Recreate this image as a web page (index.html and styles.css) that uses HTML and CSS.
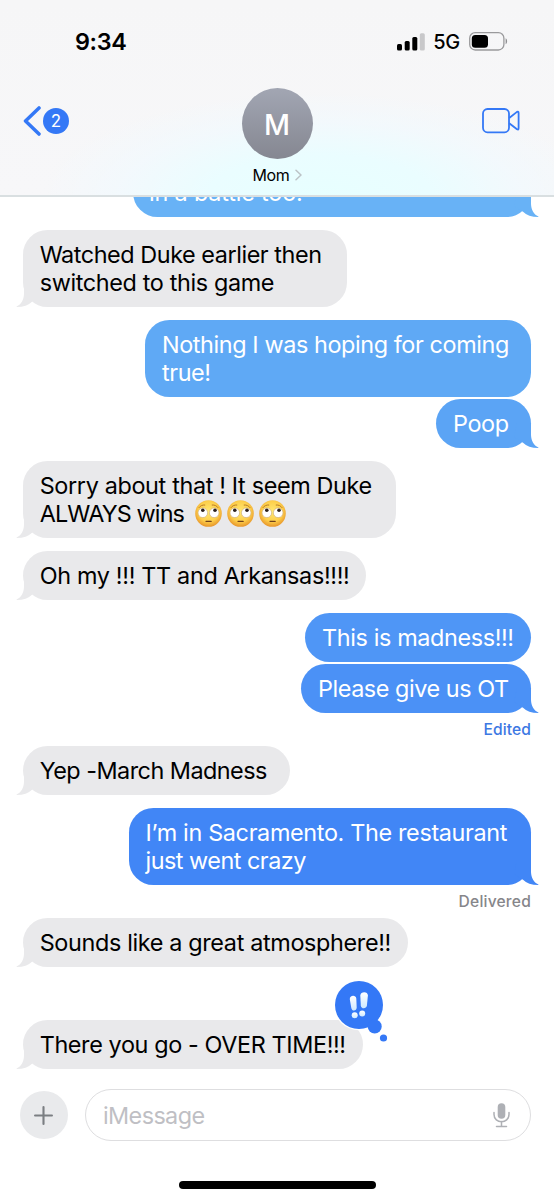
FILE: index.html
```html
<!DOCTYPE html>
<html lang="en">
<head>
<meta charset="utf-8">
<title>Messages</title>
<link rel="stylesheet" href="styles.css">
</head>
<body>
<svg class="defs" width="0" height="0" aria-hidden="true">
  <defs>
    <symbol id="tail" viewBox="0 0 25 25">
      <path d="M3 0H17V12C17.200 17.500 19.500 22.500 24.400 24.500V25C17.500 25 12.500 23.300 9 19.800L0 14Z" fill="currentColor"/>
    </symbol>
    <radialGradient id="face" cx=".5" cy=".42" r=".58">
      <stop offset="0" stop-color="#ffe873"/><stop offset=".65" stop-color="#fdcf4b"/><stop offset="1" stop-color="#e8962b"/>
    </radialGradient>
    <symbol id="eyeroll" viewBox="0 0 27 27">
      <circle cx="13.500" cy="13.500" r="13.300" fill="url(#face)"/>
      <path d="M4 7.600C5.500 5.600 7.500 4.800 9.800 5M17.200 5C19.500 4.800 21.500 5.600 23 7.600" fill="none" stroke="#b97a25" stroke-width="1" stroke-linecap="round"/>
      <circle cx="7.800" cy="12.800" r="4.800" fill="#fff" stroke="#c9a777" stroke-width=".6"/>
      <circle cx="19.200" cy="12.800" r="4.800" fill="#fff" stroke="#c9a777" stroke-width=".6"/>
      <circle cx="7.800" cy="10.200" r="1.800" fill="#2c211d"/>
      <circle cx="20" cy="10.200" r="1.800" fill="#2c211d"/>
      <path d="M11 21.300H16.200" stroke="#70401c" stroke-width="1.300" stroke-linecap="round"/>
    </symbol>
    <linearGradient id="mark" x1="0" y1="0" x2="0" y2="1">
      <stop offset="0" stop-color="#fff"/><stop offset="1" stop-color="#cfe9ff"/>
    </linearGradient>
  </defs>
</svg>

<div class="phone">
  <header class="header">
    <div class="status">
      <span class="clock">9:34</span>
      <div class="status-right">
        <svg class="signal" viewBox="0 0 28 18">
          <rect x="0" y="11" width="5" height="6.500" rx="1.500"/>
          <rect x="7.700" y="8" width="5" height="9.500" rx="1.500"/>
          <rect x="15.300" y="4" width="5" height="13.500" rx="1.500"/>
          <rect x="22.800" y="0.300" width="5" height="17.200" rx="1.500" fill="#c8c8ca"/>
        </svg>
        <span class="network">5G</span>
        <svg class="battery" viewBox="0 0 39 19">
          <rect x=".7" y=".7" width="34.200" height="17.300" rx="5.500" fill="none" stroke="#9a9a9c" stroke-width="1.300"/>
          <rect x="2.800" y="2.900" width="16.200" height="12.900" rx="3.500"/>
          <path d="M36.600 6.200C38.600 7.300 38.600 11.100 36.600 12.200Z" fill="#8f8f92"/>
        </svg>
      </div>
    </div>
    <div class="nav">
      <div class="back">
        <svg class="chevron" viewBox="0 0 18 30"><path d="M16 1.900L2.500 15L16 28.100" fill="none" stroke="#3478f6" stroke-width="3.500" stroke-linecap="round" stroke-linejoin="round"/></svg>
        <span class="unread">2</span>
      </div>
      <div class="contact">
        <div class="avatar">M</div>
        <div class="name"><span>Mom</span>
          <svg class="disclosure" viewBox="0 0 7 12"><path d="M1 1.200L6 6L1 10.800" fill="none" stroke="#bcc3c6" stroke-width="1.500" stroke-linecap="round" stroke-linejoin="round"/></svg>
        </div>
      </div>
      <svg class="video" viewBox="0 0 38 26">
        <rect x="1" y="1" width="26" height="23.300" rx="4.500" fill="none" stroke="#3478f6" stroke-width="1.800"/>
        <path d="M27.200 10L35 3.900Q36.600 3 36.600 4.900V20.300Q36.600 22.300 35 21.300L27.200 15.200" fill="none" stroke="#3478f6" stroke-width="1.800" stroke-linejoin="round"/>
      </svg>
    </div>
  </header>

  <main class="thread">
    <div class="msg sent m-battle"><p>in a battle too!</p><svg class="tail"><use href="#tail"/></svg></div>
    <div class="msg received m-duke"><p>Watched Duke earlier then</p><p class="t-switched">switched to this game</p><svg class="tail"><use href="#tail"/></svg></div>
    <div class="msg sent m-hoping"><p>Nothing I was hoping for coming</p><p>true!</p></div>
    <div class="msg sent m-poop"><p>Poop</p><svg class="tail"><use href="#tail"/></svg></div>
    <div class="msg received m-sorry"><p>Sorry about that ! It seem Duke</p><p class="with-emoji"><span class="t-always">ALWAYS wins</span><svg class="emoji"><use href="#eyeroll"/></svg><svg class="emoji"><use href="#eyeroll"/></svg><svg class="emoji"><use href="#eyeroll"/></svg></p><svg class="tail"><use href="#tail"/></svg></div>
    <div class="msg received m-ohmy"><p>Oh my !!! TT and Arkansas!!!!</p><svg class="tail"><use href="#tail"/></svg></div>
    <div class="msg sent m-madness"><p>This is madness!!!</p></div>
    <div class="msg sent m-please"><p>Please give us OT</p><svg class="tail"><use href="#tail"/></svg></div>
    <div class="receipt edited">Edited</div>
    <div class="msg received m-yep"><p>Yep -March Madness</p><svg class="tail"><use href="#tail"/></svg></div>
    <div class="msg sent m-sacramento"><p>I’m in Sacramento. The restaurant</p><p class="t-crazy">just went crazy</p><svg class="tail"><use href="#tail"/></svg></div>
    <div class="receipt delivered">Delivered</div>
    <div class="msg received m-sounds"><p>Sounds like a great atmosphere!!</p><svg class="tail"><use href="#tail"/></svg></div>
    <div class="msg received m-overtime"><p>There you go - OVER TIME!!!</p><svg class="tail"><use href="#tail"/></svg>
      <svg class="tapback" viewBox="0 0 60 64">
        <circle cx="24" cy="24" r="25.300" fill="#fff"/>
        <g fill="#3478f6">
          <circle cx="24" cy="24" r="24"/><circle cx="39.700" cy="45.500" r="7"/><circle cx="48.500" cy="57" r="3.600"/>
        </g>
        <g fill="url(#mark)">
          <path d="M14.800 18.200C14.400 14 21 13.400 21.300 17.600L21.700 26.500C21.700 30.200 16.900 30.500 16.300 26.900Z"/>
          <path d="M25.300 14.500C25.400 10.300 33 9.900 32.900 14.600L31.900 24.600C31.300 28.300 26 28.200 25.800 24.500Z"/>
          <circle cx="19.700" cy="34.300" r="3"/><circle cx="27.200" cy="32.500" r="3"/>
        </g>
      </svg>
    </div>
  </main>

  <footer class="composer">
    <div class="add"><svg viewBox="0 0 18 18"><path d="M9 1V17M1 9H17" stroke="#7b7e82" stroke-width="2" stroke-linecap="round"/></svg></div>
    <div class="field"><span>iMessage</span>
      <svg class="mic" viewBox="0 0 17 25">
        <rect x="4.700" y=".3" width="7.600" height="15.500" rx="3.800" fill="#aeb0b5"/>
        <path d="M1 9.500V11.500C1 21 16 21 16 11.500V9.500M8.500 18.600V23.200M3.500 23.400H13.500" fill="none" stroke="#aeb0b5" stroke-width="1.500" stroke-linecap="round"/>
      </svg>
    </div>
  </footer>
  <div class="home-indicator"></div>
</div>
</body>
</html>
```
FILE: styles.css
```css
* { box-sizing: border-box; }
body { margin: 0; background: #fff; font-family: Inter, "Liberation Sans", sans-serif; color: #000; }
p { margin: 0; white-space: nowrap; }
svg { display: block; flex: none; }
.defs { position: absolute; }

.phone { width: 554px; height: 1200px; display: flex; flex-direction: column; overflow: hidden; }

/* Header */
.header {
  height: 197px; flex: none; position: relative; z-index: 1;
  border-bottom: 2px solid #d9dfe1;
  background:
    radial-gradient(ellipse 280px 105px at 320px 197px, #e7ffff 0%, #eafdff 40%, rgba(240,250,255,.6) 72%, rgba(246,246,248,0) 100%),
    linear-gradient(#f6f6f7, #f7f7f9);
}
.status { height: 83px; display: flex; justify-content: space-between; align-items: center; padding: 0 46px 0 75px; }
.clock { font-size: 23.400px; font-weight: 600; letter-spacing: -.35px; }
.status-right { display: flex; align-items: center; }
.signal { width: 28px; height: 18px; }
.network { font-size: 20px; font-weight: 450; letter-spacing: -.3px; margin: 0 9px 0 8.500px; line-height: 24px; }
.battery { width: 39px; height: 19px; }
.nav { display: flex; padding: 0 34px 0 23px; }
.back { width: 218px; flex: none; display: flex; align-items: center; height: 76px; gap: 2px; }
.chevron { width: 18px; height: 30px; }
.unread { width: 26px; height: 26px; border-radius: 50%; background: #3478f6; color: #fff; font-size: 17px; line-height: 26px; text-align: center; }
.contact { width: 72px; flex: none; display: flex; flex-direction: column; align-items: center; padding-top: 5px; }
.avatar { width: 71px; height: 71px; border-radius: 50%; background: linear-gradient(#a2a6b3, #858791); color: #fff; font: 550 28.500px/73px Inter, sans-serif; text-align: center; }
.name { display: flex; align-items: center; gap: 5px; margin-top: 5px; font-size: 16px; line-height: 22px; letter-spacing: -.3px; }
.disclosure { width: 7px; height: 12px; }
.video { width: 38px; height: 26px; margin: 25px 0 0 auto; }

/* Thread */
.thread { flex: 1; display: flex; flex-direction: column; }
.msg { position: relative; flex: none; padding: 10.500px 0 10.500px 17px; font-size: 23.400px; line-height: 28px; border-radius: 24.500px; }
.received { align-self: flex-start; margin-left: 23px; padding-left: 16.700px; background: #e9e9eb; color: #000; }
.sent { align-self: flex-end; margin-right: 23px; color: #fff; background: var(--blue); }
.tail { position: absolute; bottom: 0; width: 25px; height: 25px; }
.sent .tail { right: -8px; color: var(--blue); }
.received .tail { left: -7px; color: #e9e9eb; transform: scaleX(-1); }

/* The oldest visible message is scrolled partly under the header. */
.m-battle { --blue: #68b2f6; width: 398px; height: 49px; margin-top: -29px; padding: 11px 0 10px 16px; margin-bottom: 13px; letter-spacing: -.17px; }
.m-duke { width: 323.500px; margin-bottom: 13px; letter-spacing: -.44px; }
.t-switched { letter-spacing: -.36px; }
.m-hoping { --blue: #5fa9f5; width: 386px; margin-bottom: 2px; letter-spacing: -.4px; }
.m-poop { --blue: #5ba4f5; width: 95px; margin-bottom: 13px; letter-spacing: -.4px; }
.m-sorry { width: 372.500px; margin-bottom: 13px; letter-spacing: -.35px; }
.with-emoji { display: flex; align-items: center; gap: 5.300px; }
.t-always { letter-spacing: -.87px; margin-right: 5.500px; }
.emoji { width: 27px; height: 27px; }
.m-ohmy { width: 343px; margin-bottom: 13px; letter-spacing: -.33px; }
.m-madness { --blue: #4f96f6; width: 226px; margin-bottom: 2px; letter-spacing: -.37px; }
.m-please { --blue: #4b91f6; width: 230px; letter-spacing: -.44px; }
.m-yep { width: 267px; margin-bottom: 13px; letter-spacing: -.52px; }
.m-sacramento { --blue: #4186f6; width: 402.500px; letter-spacing: -.34px; }
.t-crazy { letter-spacing: -.5px; }
.m-sounds { width: 385px; margin-bottom: 53px; letter-spacing: -.35px; }
.m-overtime { width: 340px; letter-spacing: -.38px; }

.receipt { text-align: right; padding-right: 23px; font-size: 15.600px; font-weight: 500; line-height: 20px; flex: none; }
.edited { height: 33px; padding-top: 7px; color: #3d78e3; letter-spacing: .1px; }
.delivered { height: 33px; padding-top: 7px; color: #86868a; letter-spacing: .2px; }

.tapback { position: absolute; left: 312px; top: -39px; width: 60px; height: 64px; overflow: visible; }

/* Composer */
.composer { flex: none; height: 111px; display: flex; align-items: flex-start; padding: 0 23px 0 20px; gap: 17px; }
.add { width: 48px; height: 48px; margin-top: 2px; border-radius: 50%; background: #e9eaec; display: flex; padding: 15px 0 0 14px; }
.add svg { width: 19px; height: 19px; }
.field { flex: 1; height: 52px; border: 1.500px solid #dedee0; border-radius: 26px; display: flex; justify-content: space-between; align-items: center; padding: 0 20px 0 17px; color: #bfbfc4; font-size: 23.400px; letter-spacing: -.6px; }
.mic { width: 17px; height: 25px; }
.home-indicator { position: absolute; left: 179px; top: 1181px; width: 197px; height: 8px; border-radius: 4px; background: #000; }
```
